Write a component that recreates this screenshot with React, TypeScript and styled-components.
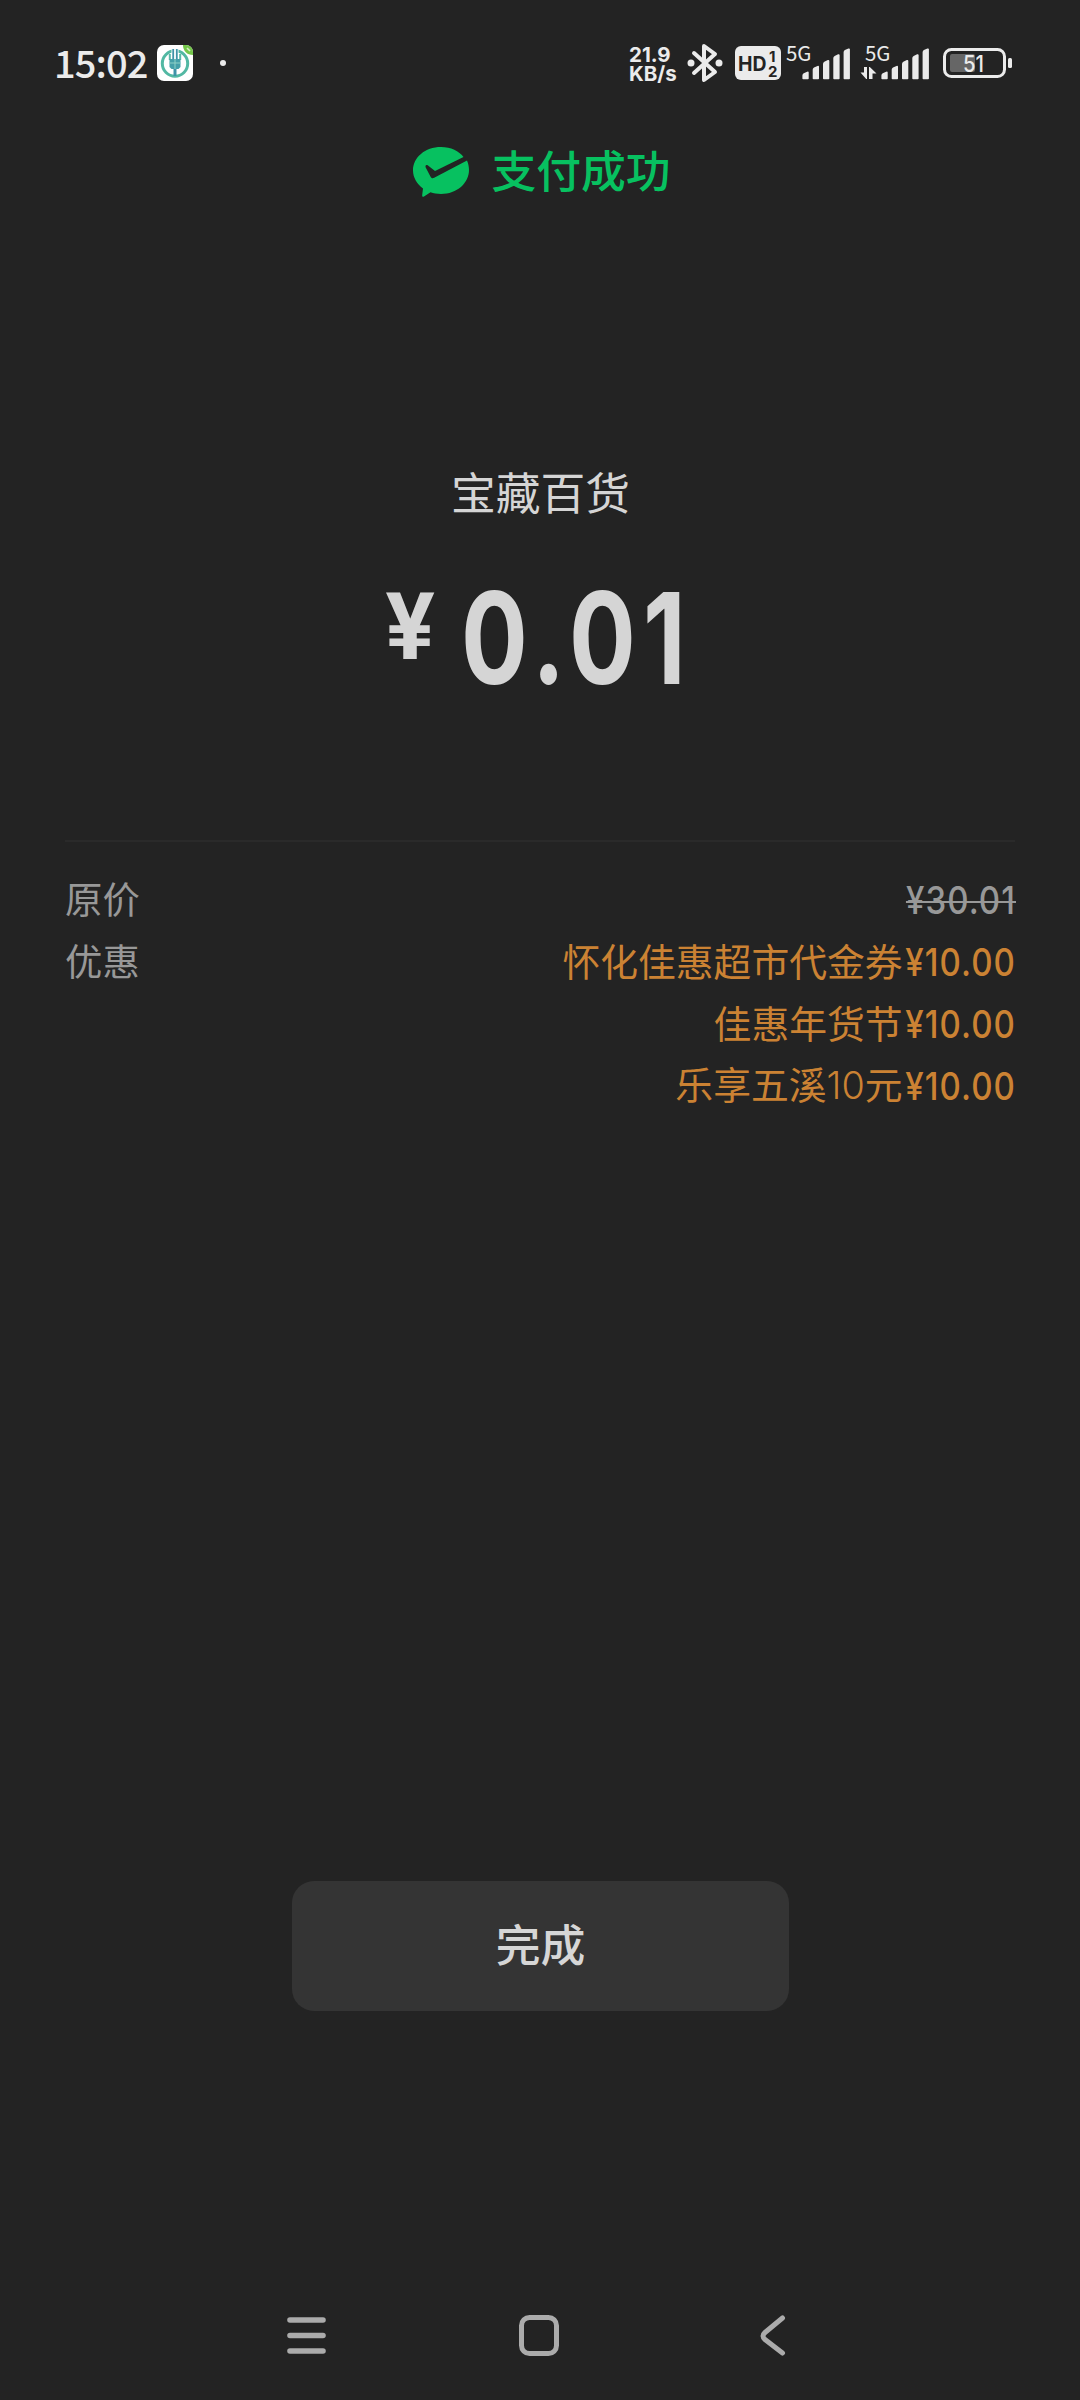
import React from "react";
import styled, { createGlobalStyle } from "styled-components";

const cjk = `"Noto Sans CJK SC", sans-serif`;

const GlobalStyle = createGlobalStyle`
  * { box-sizing: border-box; }
  html, body { margin: 0; background: #232323; }
`;

const Screen = styled.div`
  width: 1080px;
  height: 2400px;
  display: flex;
  flex-direction: column;
  background: #232323;
  color: #d5d5d5;
  font-family: ${cjk};
  overflow: hidden;
`;

const StatusBar = styled.header`
  height: 126px;
  flex: none;
  padding: 0 68px 0 54px;
  display: flex;
  align-items: center;
  justify-content: space-between;
  color: #ebebeb;
`;

const StatusGroup = styled.div`
  display: flex;
  align-items: center;
`;

const Clock = styled.span`
  width: 103px;
  padding-bottom: 3px;
  white-space: nowrap;
  letter-spacing: -0.9px;
  font: 500 38px/48px ${cjk};
`;

const Graphic = styled.svg<{ $gap?: number }>`
  display: block;
  flex: none;
  overflow: visible;
  margin-left: ${(p) => p.$gap ?? 0}px;
`;

const NetSpeed = styled.div`
  width: 58px;
  padding-top: 2px;
  display: flex;
  flex-direction: column;
  font: 700 20.5px/19px Inter, sans-serif;
  white-space: nowrap;
`;

const Header = styled.div`
  height: 92px;
  flex: none;
  padding-left: 4px;
  display: flex;
  align-items: center;
  justify-content: center;
  gap: 22px;
  color: #07c160;
`;

const Title = styled.span<{ $lift?: number; $weight?: number }>`
  padding-bottom: ${(p) => p.$lift ?? 0}px;
  font: ${(p) => p.$weight ?? 400} 44.8px/60px ${cjk};
`;

const Summary = styled.section`
  height: 622px;
  flex: none;
  padding: 243px 0 0 1px;
  display: flex;
  flex-direction: column;
  align-items: center;
`;

const Price = styled.div`
  margin-top: 38px;
  width: 310px;
  display: flex;
  align-items: flex-start;
  font-family: Inter, sans-serif;
  font-weight: 700;
`;

const Currency = styled.span`
  flex: none;
  width: 75px;
  padding-top: 14px;
  font-family: Roboto, sans-serif;
  font-size: 92px;
  line-height: 110px;
`;

const Amount = styled.span`
  flex: none;
  font-size: 127px;
  line-height: 158px;
  letter-spacing: 9px;
  transform: scaleX(0.78);
  transform-origin: left;
`;

const Details = styled.section`
  flex: none;
  margin: 0 65px;
  border-top: 2px solid #2a2a2a;
  padding-top: 27px;
  display: flex;
  flex-direction: column;
`;

const Row = styled.div`
  height: 62px;
  display: flex;
  align-items: center;
  justify-content: space-between;
  font: 400 37.8px/62px ${cjk};
  color: #989898;
`;

const Label = styled.span`
  padding-bottom: 5px;
  font-size: 37.4px;
`;

const Deal = styled.span`
  display: flex;
  align-items: center;
  color: #cb8233;
`;

const DealName = styled.span`
  padding-bottom: 5px;
`;

const Tight = styled.span`
  font-family: Inter, sans-serif;
  font-weight: 300;
`;

const Money = styled.span<{ $struck?: boolean }>`
  width: 113px;
  margin-right: -0.6px;
  display: flex;
  justify-content: flex-end;
  font-family: Inter, sans-serif;
  font-size: 38px;
  font-weight: 500;
  letter-spacing: 1.2px;
  text-decoration: ${(p) => (p.$struck ? "line-through 2px" : "none")};
  transform: scaleX(0.87);
  transform-origin: right;
`;

const Footer = styled.div`
  margin-top: auto;
  height: 519px;
  flex: none;
  display: flex;
  flex-direction: column;
  align-items: center;
  justify-content: space-between;
`;

const DoneButton = styled.button`
  width: 497px;
  height: 130px;
  margin-left: 1px;
  padding: 0 0 6px;
  border: 0;
  border-radius: 22px;
  background: #343434;
  color: #d6d6d6;
  font: 500 44.8px/60px ${cjk};
`;

const NavBar = styled.nav`
  height: 130px;
  width: 100%;
  padding-left: 287px;
  display: flex;
  align-items: center;
`;

const BankIcon = () => (
  <Graphic width="36" height="36" viewBox="0 0 36 36">
    <rect width="36" height="36" rx="7" fill="#fff" />
    <circle cx="18" cy="18.500" r="12.700" fill="none" stroke="#52b8a3" strokeWidth="3" />
    <path d="M14.500 2.500h7v7h-7z" fill="#fff" />
    <path d="M18 24v7" stroke="#3f93a8" strokeWidth="3" />
    <path d="M16.200 4v10M19.800 4v10" stroke="#3f93a8" strokeWidth="1.800" />
    <path d="M12.800 9v6M23.200 9v6" stroke="#58b9a8" strokeWidth="2" />
    <path d="M12.500 14h11v8l-2 2h-7l-2-2z" fill="#459fa9" />
    <path d="M12 18h12M18 14v10" stroke="#8fd0c6" strokeWidth="1" />
    <path d="M26 0h3a7 7 0 0 1 7 7v3c-6 0-10-4-10-10z" fill="#74c64a" />
    <path d="M30 3l3 3" stroke="#d7f0c4" strokeWidth="1.600" />
  </Graphic>
);

const Signal = ({ arrows }: { arrows?: boolean }) => (
  <Graphic width="63" height="34" viewBox="0 0 63 34" fill="#ebebeb" $gap={arrows ? 16 : 6}>
    <text x="-1" y="15" fontFamily="Noto Sans CJK SC, sans-serif" fontSize="20.500" textLength="25.500" lengthAdjust="spacingAndGlyphs">5G</text>
    {[0, 1, 2, 3, 4].map((i) => {
      const x = 15.4 + i * 10.3;
      const top = 25.5 - i * 5.8;
      return <path key={i} d={`M${x} 32.500V${top + 4}q0-1.500 1.300-2.200L${x + 4.8} ${top + 0.2}q1.500-.4 1.500 .8V32.500q0 .8-.8 .8H${x + 0.8}q-.8 0-.8-.8z`} />;
    })}
    {arrows && <path d="M-5.500 26.500h3.500V21h3v12h-.8zM3 21h.8l6.700 6.500H6.500V33H3z" />}
  </Graphic>
);

export default function App() {
  return (
    <>
      <GlobalStyle />
      <Screen>
        <StatusBar>
          <StatusGroup>
            <Clock>15:02</Clock>
            <BankIcon />
            <Graphic width="6" height="6" $gap={27}><circle cx="3" cy="3" r="3" fill="#ebebeb" /></Graphic>
          </StatusGroup>
          <StatusGroup>
            <NetSpeed><span>21.9</span><span>KB/s</span></NetSpeed>
            <Graphic width="36" height="40" viewBox="0 0 36 40">
              <path d="M7 10 28 29 17 37V3l11 8L7 30" fill="none" stroke="#ebebeb" strokeWidth="4" strokeLinejoin="round" strokeLinecap="round" />
              <circle cx="4" cy="20" r="3.500" fill="#ebebeb" />
              <circle cx="32" cy="20" r="3.500" fill="#ebebeb" />
            </Graphic>
            <Graphic width="46" height="34" viewBox="0 0 46 34" $gap={12}>
              <rect width="46" height="34" rx="6" fill="#ebebeb" />
              <g fill="#232323" fontFamily="Inter, sans-serif" fontWeight="700">
                <text x="3" y="24.500" fontSize="20" textLength="28.500" lengthAdjust="spacingAndGlyphs">HD</text>
                <text x="34" y="15.500" fontSize="15">1</text>
                <text x="33" y="30.500" fontSize="15">2</text>
              </g>
            </Graphic>
            <Signal />
            <Signal arrows />
            <Graphic width="69" height="30" viewBox="0 0 69 30" $gap={14}>
              <rect x="1.500" y="1.500" width="60" height="27" rx="7" fill="none" stroke="#ebebeb" strokeWidth="3" />
              <rect x="7" y="6" width="25" height="18" rx="2" fill="#666" />
              <rect x="65" y="10" width="4" height="10" rx="1.500" fill="#ebebeb" />
              <text x="20" y="23.500" fill="#ebebeb" fontFamily="Inter, sans-serif" fontSize="23" fontWeight="500" textLength="21" lengthAdjust="spacingAndGlyphs">51</text>
            </Graphic>
          </StatusGroup>
        </StatusBar>

        <Header>
          <Graphic width="56" height="50" viewBox="0 0 56 50">
            <path d="M28 0c10 0 18 4 22.500 10L22 24l-7-5.500c-2-1-3 0-2.300 2l5 9.500c1 1.500 2 1.500 3.500 .8L54 13.500c1.300 3 2 6.500 2 9.500 0 13-12 24-28 24-4 0-7.500-.7-10.500-1.700L11 49.500c-1.300 .8-2 0-1.800-1.500l.8-6.500C4 37 0 30.500 0 23.500 0 10.500 12 0 28 0z" fill="#07c160" />
          </Graphic>
          <Title $lift={6} $weight={500}>支付成功</Title>
        </Header>

        <Summary>
          <Title>宝藏百货</Title>
          <Price><Currency>¥</Currency><Amount>0.01</Amount></Price>
        </Summary>

        <Details>
          <Row><Label>原价</Label><Money $struck>¥30.01</Money></Row>
          <Row><Label>优惠</Label><Deal><DealName>怀化佳惠超市代金券</DealName><Money>¥10.00</Money></Deal></Row>
          <Row><span /><Deal><DealName>佳惠年货节</DealName><Money>¥10.00</Money></Deal></Row>
          <Row><span /><Deal><DealName>乐享五溪<Tight>10</Tight>元</DealName><Money>¥10.00</Money></Deal></Row>
        </Details>

        <Footer>
          <DoneButton>完成</DoneButton>
          <NavBar>
            <Graphic width="39" height="37" viewBox="0 0 39 37">
              <path d="M3 3h33M3 18.500h33M3 34h33" stroke="#ababab" strokeWidth="5.600" strokeLinecap="round" />
            </Graphic>
            <Graphic width="40" height="41" viewBox="0 0 40 41" $gap={193}>
              <rect x="2.500" y="2.500" width="35" height="36" rx="8" fill="none" stroke="#ababab" strokeWidth="5" />
            </Graphic>
            <Graphic width="25" height="41" viewBox="0 0 25 41" $gap={201}>
              <path d="M22.500 3 5 17.500q-4 3.500 0 7L22.500 38" fill="none" stroke="#ababab" strokeWidth="5" strokeLinecap="round" />
            </Graphic>
          </NavBar>
        </Footer>
      </Screen>
    </>
  );
}
